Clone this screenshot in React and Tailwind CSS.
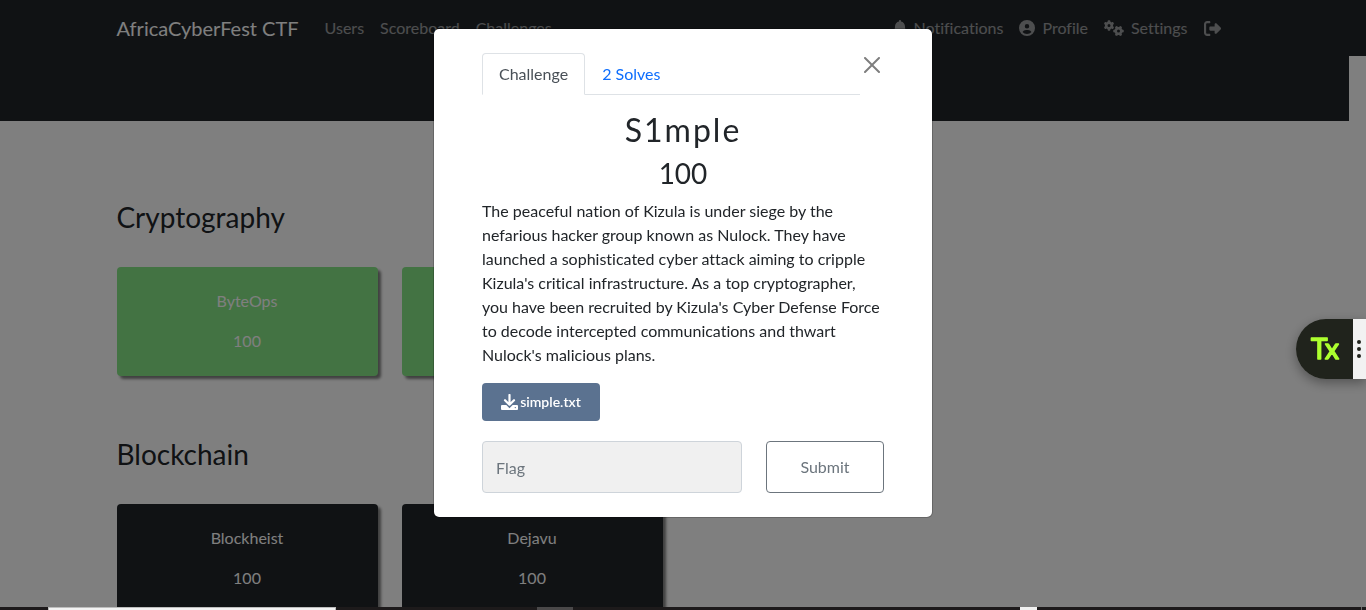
import { FaBell, FaCircleUser, FaGears, FaRightFromBracket } from "react-icons/fa6";

const categories = [
  {
    name: "Cryptography",
    challenges: [{ name: "ByteOps", value: 100, solved: true }, { solved: true }],
  },
  {
    name: "Blockchain",
    challenges: [
      { name: "Blockheist", value: 100, solved: false },
      { name: "Dejavu", value: 100, solved: false },
    ],
  },
];

function NavLink({ icon, label, children }) {
  return (
    <a href="#" aria-label={label} className="flex items-center gap-[7px] px-2 py-2 text-white/55">
      {icon}
      {children}
    </a>
  );
}

function Navbar() {
  return (
    <header className="bg-[#212529] pr-[17px]">
      <nav className="mx-auto flex h-14 max-w-[1140px] items-center px-3">
        <a href="#" className="mr-[18px] text-xl leading-[30px] text-white">AfricaCyberFest CTF</a>
        <div className="flex">
          <NavLink>Users</NavLink>
          <NavLink>Scoreboard</NavLink>
          <NavLink>Challenges</NavLink>
        </div>
        <div className="ml-auto flex">
          <NavLink icon={<FaBell className="w-[14px]" />}>Notifications</NavLink>
          <NavLink icon={<FaCircleUser />}>Profile</NavLink>
          <NavLink icon={<FaGears className="size-5" />}>Settings</NavLink>
          <NavLink label="Log out" icon={<FaRightFromBracket className="mr-1 size-[17px]" />} />
        </div>
      </nav>
    </header>
  );
}

function ChallengeCard({ name, value, solved }) {
  return (
    <button
      type="button"
      className={`flex flex-col items-center gap-4 rounded pt-[22px] pb-[23px] text-white shadow-[3px_3px_3px_#808080] ${
        solved ? "bg-[#87e687]" : "bg-[#212529]"
      }`}
    >
      <span>{name}</span>
      <span>{value}</span>
    </button>
  );
}

function DownloadIcon() {
  return (
    <svg viewBox="0 0 17 16" className="h-4 w-[17px]" aria-hidden="true">
      <path d="M1 11h15a1 1 0 0 1 1 1v3a1 1 0 0 1-1 1H1a1 1 0 0 1-1-1v-3a1 1 0 0 1 1-1z" fill="#fff" />
      <path d="M3.5 6l5 5 5-5" fill="none" stroke="#5b7290" strokeWidth="4.5" />
      <path
        d="M8.5 1v9M4 6.2l4.5 4.5 4.5-4.5"
        fill="none"
        stroke="#fff"
        strokeWidth="2.2"
        strokeLinecap="round"
        strokeLinejoin="round"
      />
      <circle cx="14.3" cy="13.6" r="0.7" fill="#5b7290" />
    </svg>
  );
}

function ChallengeModal() {
  return (
    <div
      role="dialog"
      aria-modal="true"
      aria-labelledby="challenge-name"
      className="mx-auto mt-7 w-full max-w-[500px] rounded-md border border-black/20 bg-white bg-clip-padding px-12 py-6"
    >
      <div className="flex items-start">
        <div role="tablist" className="flex grow border-b border-[#dee2e6]">
          <button
            type="button"
            role="tab"
            aria-selected="true"
            className="-mb-px rounded-t border border-[#dee2e6] border-b-white bg-white px-4 py-2 text-[#495057]"
          >
            Challenge
          </button>
          <button
            type="button"
            role="tab"
            aria-selected="false"
            className="-mb-px border border-transparent px-4 py-2 text-[#0d6efd]"
          >
            2 Solves
          </button>
        </div>
        <button type="button" aria-label="Close" className="p-1 opacity-50">
          <svg viewBox="0 0 16 16" className="size-4" fill="#000">
            <path d="M.293.293a1 1 0 011.414 0L8 6.586 14.293.293a1 1 0 111.414 1.414L9.414 8l6.293 6.293a1 1 0 01-1.414 1.414L8 9.414l-6.293 6.293a1 1 0 01-1.414-1.414L6.586 8 .293 1.707a1 1 0 010-1.414z" />
          </svg>
        </button>
      </div>

      <h2 id="challenge-name" className="mt-4 mb-2 text-center text-[32px] leading-[38px] tracking-[2px]">
        S1mple
      </h2>
      <h3 className="mb-[10px] text-center text-[28px] leading-8">100</h3>
      <p className="mb-4">
        The peaceful nation of Kizula is under siege by the nefarious hacker group known as Nulock. They have
        launched a sophisticated cyber attack aiming to cripple Kizula's critical infrastructure. As a top
        cryptographer, you have been recruited by Kizula's Cyber Defense Force to decode intercepted
        communications and thwart Nulock's malicious plans.
      </p>

      <div className="mb-5 grid grid-cols-3 gap-6">
        <a
          href="#"
          className="flex h-[38px] items-center justify-center gap-[2px] rounded bg-[#5b7290] text-sm font-semibold text-white"
        >
          <DownloadIcon />
          simple.txt
        </a>
      </div>

      <form className="grid grid-cols-3 gap-6" onSubmit={(e) => e.preventDefault()}>
        <input
          type="text"
          aria-label="Flag"
          placeholder="Flag"
          className="col-span-2 h-[52px] w-full rounded border border-[#ced4da] bg-[#f0f0f0] px-[13px] placeholder:text-[#6c757d]"
        />
        <button type="submit" className="h-[52px] rounded border border-[#6c757d] text-[#6c757d]">
          Submit
        </button>
      </form>
    </div>
  );
}

function SideWidget() {
  return (
    <div className="fixed top-[319px] right-0 flex h-[60px] rounded-l-full shadow-[0_4px_12px_rgba(0,0,0,0.35)]">
      <button type="button" className="w-[57px] rounded-l-full bg-[#20231c]">
        <svg viewBox="0 0 57 60" className="h-[60px] w-[57px]">
          <text
            x="29"
            y="40"
            textAnchor="middle"
            fill="#adff2f"
            stroke="#adff2f"
            strokeWidth="1.5"
            strokeLinejoin="round"
            className="text-[28px] font-normal"
          >
            Tx
          </text>
        </svg>
      </button>
      <button
        type="button"
        aria-label="More options"
        className="flex w-[13px] flex-col items-start justify-center gap-[3px] bg-[#f2f2f2] pl-1"
      >
        <span className="size-1 rounded-full bg-[#20231c]" />
        <span className="size-1 rounded-full bg-[#20231c]" />
        <span className="size-1 rounded-full bg-[#20231c]" />
      </button>
    </div>
  );
}

function Taskbar() {
  return (
    <div className="fixed inset-x-0 bottom-0 flex h-[3px] bg-[#1d1a1b]">
      <div className="ml-12 w-72 border-x border-t border-[#bdbdbd] bg-[#f3f3f3]" />
      <div className="ml-[201px] w-9 bg-[#4a4849]" />
      <div className="ml-auto w-[17px] bg-[#f0f0f0]" />
      <div className="mr-1 ml-[324px] w-px bg-[#6e6e6e]" />
    </div>
  );
}

export default function App() {
  return (
    <div className="h-screen overflow-hidden bg-white font-['Lato',sans-serif] text-base text-[#212529] [font-variant-ligatures:none]">
      <Navbar />
      <main className="pr-[17px]">
        <div className="h-[65px] bg-[#212529]" />
        <div className="mx-auto flex max-w-[1140px] flex-col gap-[62px] px-3 pt-20">
          {categories.map((category) => (
            <section key={category.name}>
              <h3 className="mb-[34px] text-[28px] leading-8">{category.name}</h3>
              <div className="grid grid-cols-4 gap-6">
                {category.challenges.map((challenge, index) => (
                  <ChallengeCard key={index} {...challenge} />
                ))}
              </div>
            </section>
          ))}
        </div>
      </main>

      <div className="fixed inset-0 bg-black/50">
        <ChallengeModal />
      </div>
      <SideWidget />
      <Taskbar />
    </div>
  );
}
